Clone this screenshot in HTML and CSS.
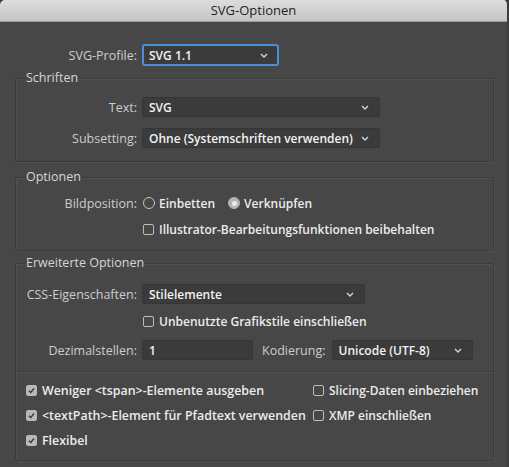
FILE: index.html
```html
<!DOCTYPE html>
<html lang="de">
<head>
<meta charset="utf-8">
<title>SVG-Optionen</title>
<link rel="stylesheet" href="styles.css">
</head>
<body>
<div class="window">
  <div class="titlebar">SVG-Optionen</div>
  <div class="content">
    <div class="row profile-row">
      <span class="lbl lbl-outer">SVG-Profile:</span>
      <div class="select focus w-profile"><span>SVG 1.1</span><svg class="chev" viewBox="0 0 8 5"><path d="M1 1 L4 4 L7 1"/></svg></div>
    </div>

    <div class="group g1">
      <div class="legend">Schriften</div>
      <div class="row r-text">
        <span class="lbl">Text:</span>
        <div class="select w-wide"><span>SVG</span><svg class="chev" viewBox="0 0 8 5"><path d="M1 1 L4 4 L7 1"/></svg></div>
      </div>
      <div class="row r-subset">
        <span class="lbl">Subsetting:</span>
        <div class="select w-wide"><span>Ohne (Systemschriften verwenden)</span><svg class="chev" viewBox="0 0 8 5"><path d="M1 1 L4 4 L7 1"/></svg></div>
      </div>
    </div>

    <div class="group g2">
      <div class="legend">Optionen</div>
      <div class="row r-radio">
        <span class="lbl">Bildposition:</span>
        <label class="opt"><span class="radio"></span>Einbetten</label>
        <label class="opt opt-gap"><span class="radio on"></span>Verknüpfen</label>
      </div>
      <div class="row r-illu">
        <span class="lbl"></span>
        <label class="opt"><span class="cb"></span>Illustrator-Bearbeitungsfunktionen beibehalten</label>
      </div>
    </div>

    <div class="group g3">
      <div class="legend">Erweiterte Optionen</div>
      <div class="row r-css">
        <span class="lbl">CSS-Eigenschaften:</span>
        <div class="select w-css"><span>Stilelemente</span><svg class="chev" viewBox="0 0 8 5"><path d="M1 1 L4 4 L7 1"/></svg></div>
      </div>
      <div class="row r-unused">
        <span class="lbl"></span>
        <label class="opt"><span class="cb"></span>Unbenutzte Grafikstile einschließen</label>
      </div>
      <div class="row r-dez">
        <span class="lbl">Dezimalstellen:</span>
        <div class="input w-dez">1</div>
        <span class="lbl-inline">Kodierung:</span>
        <div class="select w-kod"><span>Unicode (UTF-8)</span><svg class="chev" viewBox="0 0 8 5"><path d="M1 1 L4 4 L7 1"/></svg></div>
      </div>
      <div class="sep"></div>
      <div class="checks">
        <label class="opt wide"><span class="cb on"><svg viewBox="0 0 10 10"><path d="M2.2 5.2 L4.2 7.2 L7.8 2.8"/></svg></span>Weniger &lt;tspan&gt;-Elemente ausgeben</label>
        <label class="opt"><span class="cb"></span>Slicing-Daten einbeziehen</label>
        <label class="opt wide"><span class="cb on"><svg viewBox="0 0 10 10"><path d="M2.2 5.2 L4.2 7.2 L7.8 2.8"/></svg></span>&lt;textPath&gt;-Element für Pfadtext verwenden</label>
        <label class="opt"><span class="cb"></span>XMP einschließen</label>
        <label class="opt wide"><span class="cb on"><svg viewBox="0 0 10 10"><path d="M2.2 5.2 L4.2 7.2 L7.8 2.8"/></svg></span>Flexibel</label>
      </div>
    </div>
  </div>
</div>
</body>
</html>
```

FILE: styles.css
```css
* { box-sizing: border-box; }
html, body {
  margin: 0;
  padding: 0;
  background: #3a3a3a;
}
body {
  font-family: "Open Sans", "Liberation Sans", sans-serif;
  font-size: 12.5px;
  color: #cfcfcf;
}
.window {
  width: 509px;
  height: 467px;
  background: #474747;
  border-radius: 5px 5px 0 0;
  overflow: hidden;
  border-right: 2px solid #3c3c3c;
}
.titlebar {
  height: 22px;
  line-height: 21px;
  text-align: center;
  color: #1e1e1e;
  font-size: 13px;
  background: linear-gradient(#dcdcdc, #c6c6c6);
  border-bottom: 1px solid #9c9c9c;
}
.content {
  padding: 0 13px 0 15px;
}
.row {
  display: flex;
  align-items: center;
  height: 20px;
}
.lbl {
  width: 121px;
  margin-right: 5px;
  text-align: right;
  color: #cdcdcd;
  white-space: nowrap;
  flex: none;
}
.lbl-outer { width: 122px; }
.profile-row { margin-top: 22px; height: 22px; }

.select, .input {
  height: 20px;
  background: #3b3b3b;
  border: 1px solid #363636;
  border-radius: 2px;
  display: flex;
  align-items: center;
  padding: 0 10px 0 6px;
  color: #f2f2f2;
  font-size: 12px;
  font-weight: 600;
  flex: none;
}
.select span { flex: 1; white-space: nowrap; }
.select.focus {
  height: 22px;
  border: 2px solid #4a8ed8;
  border-radius: 3px;
  padding-left: 5px;
  padding-right: 9px;
}
.chev {
  width: 8px;
  height: 5px;
  fill: none;
  stroke: #d8d8d8;
  stroke-width: 1.3;
}
.w-profile { width: 137px; }
.w-wide { width: 238px; }
.w-css { width: 223px; }
.w-dez { width: 111px; }
.w-kod { width: 141px; }
.lbl-inline { margin: 0 6px 0 9px; color: #cdcdcd; }

.group {
  border: 1px solid #3b3b3b;
  border-radius: 2px;
  box-shadow: 1px 1px 0 #525252 inset, 1px 1px 0 #505050;
}
.legend {
  width: fit-content;
  height: 14px;
  line-height: 14px;
  margin: -8px 0 0 9px;
  padding: 0 1px;
  background: #474747;
  color: #d6d6d6;
}
.g1 { margin-top: 12px; padding-bottom: 13px; }
.g2 { margin-top: 15px; padding-bottom: 11px; }
.g3 { margin-top: 12px; padding-bottom: 10px; }

.r-text { margin-top: 12px; }
.r-subset { margin-top: 11px; }
.r-radio { margin-top: 9px; }
.r-illu { margin-top: 6px; }
.r-css { margin-top: 14px; }
.r-unused { margin-top: 7px; }
.r-dez { margin-top: 9px; }

.opt {
  display: flex;
  align-items: center;
  color: #ececec;
  font-size: 12px;
  font-weight: 600;
  white-space: nowrap;
}
.opt.wide { font-size: 12.4px; }
.opt-gap { margin-left: 12px; }
.radio {
  width: 12px;
  height: 12px;
  border: 1px solid #c4c4c4;
  border-radius: 50%;
  margin: 0 4px 0 1px;
  flex: none;
  display: flex;
  align-items: center;
  justify-content: center;
}
.radio.on {
  background: #b4b4b4;
  border-color: #b4b4b4;
}
.radio.on::after {
  content: "";
  width: 5px;
  height: 5px;
  border-radius: 50%;
  background: #ececec;
}
.cb {
  width: 11px;
  height: 11px;
  border: 1px solid #bdbdbd;
  border-radius: 2px;
  margin: 0 5px 0 1px;
  flex: none;
  display: flex;
}
.cb.on {
  background: #b8b8b8;
  border-color: #b8b8b8;
}
.cb svg {
  width: 9px;
  height: 9px;
  fill: none;
  stroke: #3a3a3a;
  stroke-width: 1.6;
}
.sep {
  height: 1px;
  background: #3b3b3b;
  box-shadow: 0 1px 0 #525252;
  margin-top: 11px;
}
.checks {
  display: grid;
  grid-template-columns: 287px auto;
  grid-auto-rows: 20px;
  row-gap: 5px;
  padding-left: 9px;
  margin-top: 8px;
}
.checks .opt { height: 20px; }
```
